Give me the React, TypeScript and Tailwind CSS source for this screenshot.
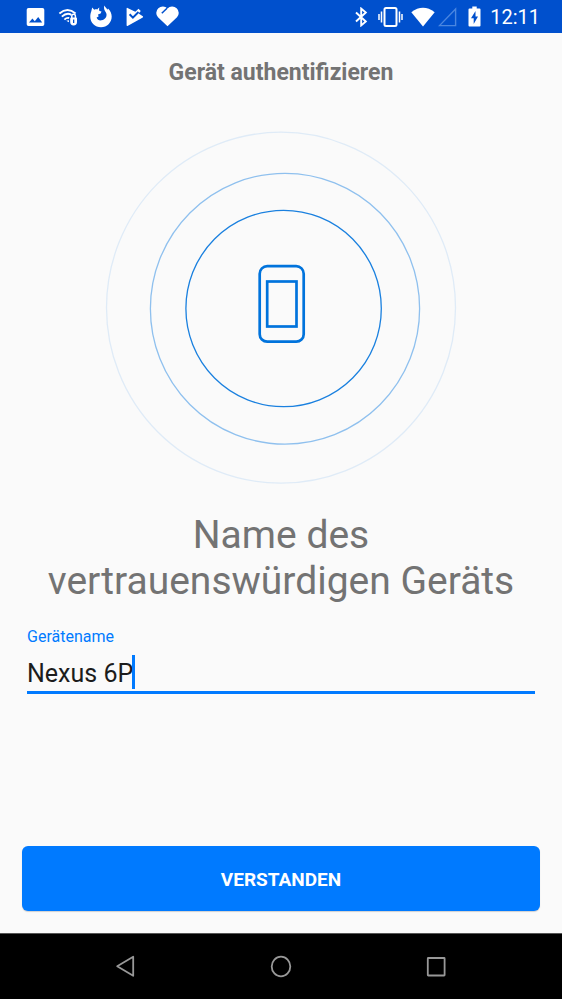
import { useState } from "react";

function StatusBar() {
  return (
    <header className="flex h-[33px] items-center justify-between bg-[#0050cd] pr-[22px] pl-[26px] text-white">
      <div className="flex items-center gap-3">
        <svg width="19" height="20" viewBox="0 0 19 20" aria-label="Bild" fill="currentColor">
          <path
            fillRule="evenodd"
            d="M2.5 1h14A1.8 1.8 0 0 1 18.300 2.800v14.400A1.800 1.800 0 0 1 16.500 19h-14A1.800 1.800 0 0 1 .7 17.200V2.800A1.800 1.800 0 0 1 2.500 1ZM3 15.600h13.200l-4-5.600-3.400 4.200-2.400-2.600Z"
          />
        </svg>
        <svg width="21" height="20" viewBox="-2 0 21 20" aria-label="Gesichertes WLAN" fill="none">
          <g stroke="currentColor" strokeWidth="1.900">
            <path d="M.4 6.400Q8.500-.2 16.600 6.400" />
            <path d="M2.800 9.600Q7.800 5.200 12.400 7.800" />
            <path d="M5.400 12.600Q7.600 10.400 10.200 11" />
          </g>
          <path d="M7.200 13.800 10 15.200v-2Z" fill="currentColor" />
          <path d="M12.800 11V9a1.800 1.800 0 0 1 3.600 0v2" stroke="currentColor" strokeWidth="1.500" />
          <path
            fillRule="evenodd"
            fill="currentColor"
            d="M12.200 10.500h4.800a1 1 0 0 1 1 1v3.500a3.400 3.400 0 0 1-6.800 0v-3.500a1 1 0 0 1 1-1ZM14 12.500v3.500h1.300v-3.500Z"
          />
        </svg>
        <svg width="22" height="23" viewBox="0 0 22 23" aria-label="Firefox" fill="currentColor">
          <path d="M1.300 6.200 2.200 2.600 4.200 4.700C5.400 4.200 6.400 4.200 7.400 4.400 7.800 3.500 8.500 2.900 9.400 2.600 8.900 4 9 5.100 9.500 6L11.500 6.600 10.600 8.400 8 9.400 8.600 11.400 6.600 12.500C7.300 14.700 9.300 15.800 11.600 15.300 15 14.700 16.900 12 16.500 9 16.200 6.600 12.900 4.500 14.400.4 15.200 2 16.700 3.200 17.600 4.800L18 3.400C20.400 5.600 21.700 8.400 21.700 11.600 21.700 17.800 17 22.300 11 22.300S.3 17.700.3 12C.3 9.700.7 7.600 1.300 6.200Z" />
        </svg>
        <svg width="20" height="20" viewBox="-2 0 20 20" aria-label="Play" fill="currentColor">
          <path d="M1.500.9 9.300 4.800 12.500 1.800 14.800 4 12.600 6.600 16.800 9.300Q17.400 9.900 16.800 10.500L1.500 19Q.6 19.300.6 18.300V1.600Q.6.5 1.500.9Z" />
          <path d="m3.600 7.200 3.300 3.400 5.600-5.600" fill="none" stroke="#0050cd" strokeWidth="2" />
        </svg>
        <svg width="23" height="21" viewBox="0 0 23 21" aria-label="Gesundheit" fill="currentColor">
          <path d="M11.500 20.300 2 11.300A6.100 6.100 0 0 1 11.500 2.500 6.100 6.100 0 0 1 21 11.300Z" />
          <path d="m5.800 7.200 5.200-5" stroke="#0050cd" strokeWidth="1.500" />
        </svg>
      </div>
      <div className="flex items-center">
        <svg width="13" height="20" viewBox="0 0 13 20" aria-label="Bluetooth" fill="none" stroke="currentColor" strokeWidth="1.900">
          <path d="m1 5.500 9.800 9L6.200 18.400V1.600L10.800 5.500 1 14.500" />
        </svg>
        <svg className="ml-[10px]" width="25" height="20" viewBox="0 0 25 20" aria-label="Vibration" fill="none" stroke="currentColor">
          <rect x="6.500" y="1" width="12" height="18" rx="1.500" strokeWidth="2" />
          <path d="M3.500 4.500v11M1 7v6M21.500 4.500v11M24 7v6" strokeWidth="1.500" />
        </svg>
        <svg className="ml-[8px]" width="24" height="20" viewBox="0 0 24 20" aria-label="WLAN" fill="currentColor">
          <path d="M.3 5.200Q12-3.600 23.700 5.200L12 19.500Z" />
        </svg>
        <svg className="ml-[3px]" width="19" height="20" viewBox="0 0 19 20" aria-label="Kein Mobilfunk" fill="none">
          <path d="M17.600 2v16.600H1.500Z" stroke="#4a86e0" strokeWidth="1.400" />
        </svg>
        <svg className="ml-[11px]" width="13" height="21" viewBox="0 0 13 21" aria-label="Akku lädt">
          <path fill="currentColor" d="M4.300.5h4.400v2H11.500a1 1 0 0 1 1 1v16a1 1 0 0 1-1 1h-10a1 1 0 0 1-1-1v-16a1 1 0 0 1 1-1h2.800Z" />
          <path fill="#0050cd" d="M7.500 5 3 12.200h2.700V18L10 10.500H7.500Z" />
        </svg>
        <time className="ml-[9px] text-[20px] leading-[24px]">12:11</time>
      </div>
    </header>
  );
}

function DeviceRings() {
  return (
    <svg className="mx-auto mt-[43px] block" width="352" height="354" viewBox="105 131 352 354" fill="none" stroke="#0073dc" aria-hidden="true">
      <ellipse cx="281" cy="307.700" rx="174.500" ry="175.500" strokeWidth="1.300" stroke="#dfebf7" />
      <ellipse cx="285" cy="308.700" rx="134.600" ry="135.400" strokeWidth="1.300" stroke="#8fc0ee" />
      <ellipse cx="283.600" cy="308.500" rx="97.700" ry="98.200" strokeWidth="1.300" stroke="#1a80df" />
      <rect x="259.700" y="266.200" width="44" height="75.500" rx="7.500" strokeWidth="2.700" />
      <rect x="267.200" y="281.500" width="29.300" height="45" strokeWidth="2.700" />
    </svg>
  );
}

function NavigationBar() {
  return (
    <nav className="flex h-[66px] items-center justify-center gap-[131px] border-t border-[#555] bg-black text-[#989898]">
      <button type="button" aria-label="Zurück">
        <svg width="24" height="24" viewBox="0 0 24 24" fill="none" stroke="currentColor" strokeWidth="1.800" strokeLinejoin="round">
          <path d="M19.200 1.800v19L3.200 11.300Z" />
        </svg>
      </button>
      <button type="button" aria-label="Startseite">
        <svg width="24" height="24" viewBox="0 0 24 24" fill="none" stroke="currentColor" strokeWidth="1.800">
          <ellipse cx="12" cy="11.500" rx="9.300" ry="9.800" />
        </svg>
      </button>
      <button type="button" aria-label="Übersicht">
        <svg width="24" height="24" viewBox="0 0 24 24" fill="none" stroke="currentColor" strokeWidth="1.800">
          <rect x="3.800" y="3" width="16.800" height="17.500" rx=".5" />
        </svg>
      </button>
    </nav>
  );
}

export default function App() {
  const [name, setName] = useState("Nexus 6P");

  return (
    <div className="flex min-h-screen flex-col bg-[#fafafa] font-['Roboto',sans-serif]">
      <StatusBar />
      <main className="flex flex-1 flex-col px-[22px] pb-[22px]">
        <h1 className="mt-[25px] text-center text-[23px] leading-[30px] font-bold text-[#737373]">
          Gerät authentifizieren
        </h1>
        <DeviceRings />
        <h2 className="mt-[27px] text-center text-[39px] leading-[46px] text-[#737373]">
          Name des
          <br />
          vertrauenswürdigen Geräts
        </h2>
        <div className="mx-[5px] mt-[23px] flex flex-col">
          <label htmlFor="device-name" className="text-[16px] leading-[20px] text-[#007aff]">
            Gerätename
          </label>
          <div className="mt-[8px] flex items-center border-b-3 border-[#007aff] pb-[2px]">
            <input
              id="device-name"
              type="text"
              value={name}
              onChange={(event) => setName(event.target.value)}
              className="h-[34px] max-w-full pt-[2px] text-[25px] leading-[32px] text-[#1c1c1c] caret-transparent outline-none [field-sizing:content]"
            />
            <span aria-hidden="true" className="-ml-px h-[34px] w-[3px] bg-[#007aff]" />
          </div>
        </div>
        <button
          type="button"
          className="mt-auto h-[65px] rounded-md bg-[#007aff] pt-[3px] text-[19px] font-bold text-white shadow-[0_1px_1px_#d0d0d0]"
        >
          VERSTANDEN
        </button>
      </main>
      <NavigationBar />
    </div>
  );
}
